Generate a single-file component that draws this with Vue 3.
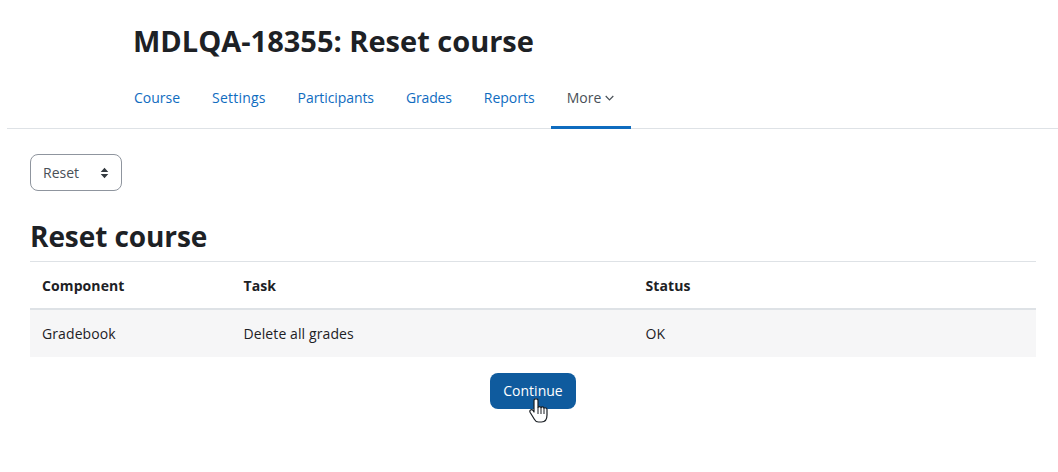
<script setup>
const tabs = ['Course', 'Settings', 'Participants', 'Grades', 'Reports'];
</script>

<template>
  <div class="page">
    <header class="head">
      <h1 class="title">MDLQA-18355: Reset course</h1>
      <nav class="tabs">
        <a v-for="t in tabs" :key="t" class="tab">{{ t }}</a>
        <a class="tab active">More
          <svg class="chev" width="9" height="6" viewBox="0 0 9 6"><path d="M.7 1l3.800 3.800L8.300 1" fill="none" stroke="#495057" stroke-width="1.200"/></svg>
        </a>
      </nav>
    </header>
    <main class="body">
      <div class="select">
        <span>Reset</span>
        <svg width="9" height="12" viewBox="0 0 9 12"><path d="M4.500.8l3.800 4.200H.7zM4.500 11.200L.7 7h7.600z" fill="#343a40"/></svg>
      </div>
      <h2 class="sub">Reset course</h2>
      <table class="grid">
        <thead>
          <tr><th class="c1">Component</th><th class="c2">Task</th><th>Status</th></tr>
        </thead>
        <tbody>
          <tr><td>Gradebook</td><td>Delete all grades</td><td>OK</td></tr>
        </tbody>
      </table>
      <div class="actions">
        <div class="btn">Continue
          <svg class="cursor" width="20" height="25" viewBox="0 0 20 25"><path d="M5 2.500c0-2.300 4-2.300 4 0V9.500c.5-1.300 2.600-1.300 3 .2.500-1.200 2.600-1 3 .6.500-.9 2.700-.7 3 1V17c0 4-2 7-5.500 7H9.500c-2 0-3.200-1-4-2.500L1.200 14.500c-1.200-2.200 1.300-3.800 3-1.800l.8 1.300z" fill="#fff" stroke="#1a1f24" stroke-width="1.200" stroke-linejoin="round"/><path d="M9 9.500V16M12 9.700V16M15 10.300V16" fill="none" stroke="#1a1f24" stroke-width="1"/></svg>
        </div>
      </div>
    </main>
  </div>
</template>

<style>
html, body { margin: 0; background: #fff; }
</style>

<style scoped>
.page { width: 1058px; height: 472px; overflow: hidden; font-family: "Open Sans", "Noto Sans", sans-serif; color: #1d2125; font-size: 14px; }
.head { margin-left: 7px; border-bottom: 1px solid #dee2e6; padding-left: 127px; height: 128px; }
.title { margin: 0 0 0 -1px; padding-top: 23px; font-size: 29px; line-height: 36px; font-weight: 700; }
.tabs { display: flex; margin-top: 10px; }
.tab { display: block; padding: 0 16px; height: 60px; line-height: 57px; color: #0f6cbf; box-sizing: border-box; }
.tab:first-child { padding-left: 0; }
.tab:nth-child(2) { letter-spacing: .2px; }
.tab:nth-child(3) { letter-spacing: -.08px; }
.tab:nth-child(4) { letter-spacing: -.16px; }
.tab:nth-child(5) { padding-right: 16.500px; }
.active { color: #495057; border-bottom: 3px solid #0f6cbf; width: 80px; padding-left: 15.500px; white-space: nowrap; }
.chev { margin-bottom: 2px; }
.body { padding: 25px 22px 0 30px; }
.select { width: 92px; height: 37px; box-sizing: border-box; border: 1px solid #8f959e; border-radius: 8px; display: flex; align-items: center; justify-content: space-between; padding: 0 12px; color: #495057; }
.sub { margin: 26px 0 0; font-size: 28px; line-height: 38px; font-weight: 700; letter-spacing: -.08px; }
.grid { width: 100%; margin-top: 6px; border-collapse: collapse; border-top: 1px solid #dee2e6; table-layout: fixed; letter-spacing: .1px; }
.grid th { text-align: left; font-weight: 700; height: 46px; padding: 0 12px; border-bottom: 2px solid #dee2e6; }
.grid td { height: 47px; padding: 0 12px; background: #f6f6f7; }
.c1 { box-sizing: border-box; width: 201.500px; }
.c2 { box-sizing: border-box; width: 402px; }
.actions { display: flex; justify-content: center; margin-top: 16px; }
.btn { position: relative; width: 86px; height: 36px; line-height: 36px; text-align: center; border-radius: 8px; background: #0f5b9e; color: #fff; }
.cursor { position: absolute; left: 39px; top: 25px; }
</style>
